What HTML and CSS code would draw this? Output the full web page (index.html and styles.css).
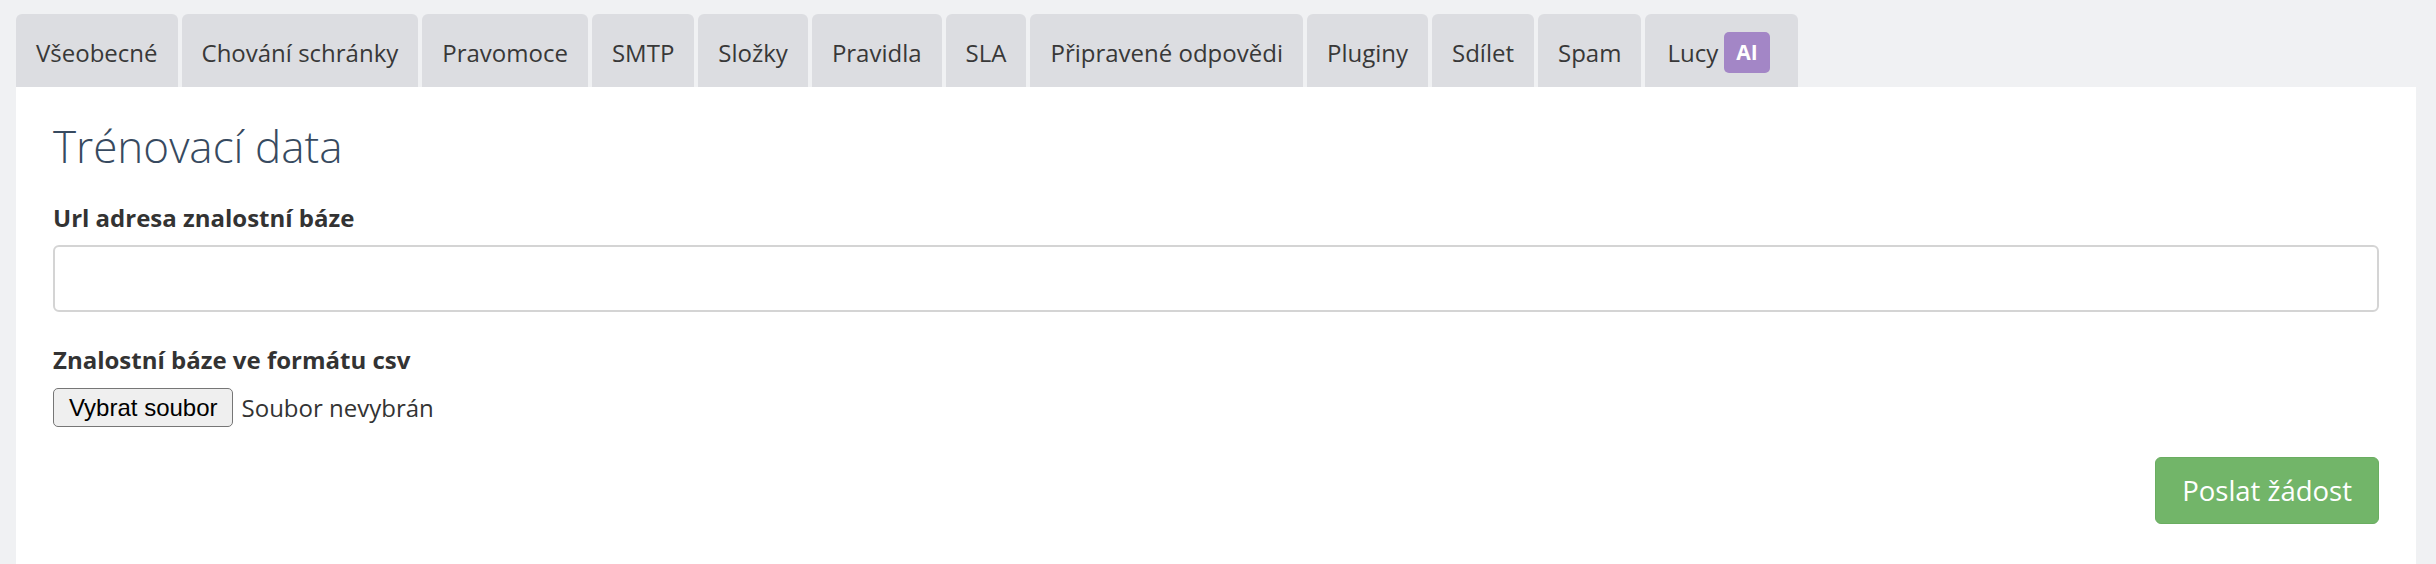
FILE: index.html
```html
<!DOCTYPE html>
<html lang="cs">
<head>
<meta charset="utf-8">
<title>Trénovací data</title>
<link rel="stylesheet" href="styles.css">
</head>
<body>
<div class="page">
  <ul class="tabs">
    <li class="tab">Všeobecné</li>
    <li class="tab">Chování schránky</li>
    <li class="tab">Pravomoce</li>
    <li class="tab">SMTP</li>
    <li class="tab">Složky</li>
    <li class="tab">Pravidla</li>
    <li class="tab">SLA</li>
    <li class="tab">Připravené odpovědi</li>
    <li class="tab">Pluginy</li>
    <li class="tab">Sdílet</li>
    <li class="tab">Spam</li>
    <li class="tab tab-lucy">Lucy <span class="badge">AI</span></li>
  </ul>
  <div class="panel">
    <h2 class="title">Trénovací data</h2>
    <label class="label">Url adresa znalostní báze</label>
    <div class="input"></div>
    <label class="label label-2">Znalostní báze ve formátu csv</label>
    <div class="file-row">
      <span class="file-btn">Vybrat soubor</span>
      <span class="file-name">Soubor nevybrán</span>
    </div>
    <div class="actions">
      <span class="submit">Poslat žádost</span>
    </div>
  </div>
</div>
</body>
</html>
```
FILE: styles.css
```css
* { box-sizing: border-box; }
html, body {
  margin: 0;
  padding: 0;
  background: #f0f1f3;
  font-family: "Open Sans", "Liberation Sans", sans-serif;
  color: #333;
}
.page {
  padding: 14px 20px 0 16px;
}
.tabs {
  list-style: none;
  margin: 0;
  padding: 0;
  display: flex;
  gap: 4px;
}
.tab {
  background: #dcdde1;
  border-radius: 6px 6px 0 0;
  font-size: 24px;
  line-height: 34px;
  height: 73px;
  padding: 4px 20px 0 20px;
  color: #383838;
  white-space: nowrap;
  display: flex;
  align-items: center;
}
.tab-lucy {
  padding-left: 22px;
  padding-right: 28px;
}
.badge {
  display: inline-block;
  margin-left: 6px;
  background: #a386c6;
  color: #fff;
  font-weight: 700;
  font-size: 21px;
  line-height: 41px;
  height: 41px;
  padding: 0 12px;
  border-radius: 5px;
}
.panel {
  background: #fff;
  padding: 32px 37px 40px 37px;
  min-height: 480px;
}
.title {
  margin: 0;
  font-size: 44px;
  line-height: 54px;
  font-weight: 300;
  color: #374a60;
}
.label {
  display: block;
  margin-top: 28px;
  font-size: 24px;
  line-height: 33px;
  font-weight: 700;
  color: #333;
}
.input {
  margin-top: 11px;
  height: 67px;
  border: 2px solid #d4d4d4;
  border-radius: 6px;
  background: #fff;
}
.label-2 {
  margin-top: 31px;
}
.file-row {
  margin-top: 12px;
  display: flex;
  align-items: center;
}
.file-btn {
  display: inline-flex;
  align-items: center;
  height: 39px;
  padding: 0 14px 0 15px;
  border: 1.5px solid #767676;
  border-radius: 5px;
  background: #efefef;
  font-family: "Liberation Sans", Arial, sans-serif;
  font-size: 24px;
  color: #000;
}
.file-name {
  margin-left: 9px;
  font-size: 24px;
  color: #333;
}
.actions {
  margin-top: 30px;
  display: flex;
  justify-content: flex-end;
}
.submit {
  display: inline-block;
  height: 67px;
  padding: 14px 26px 14px 26px;
  font-size: 27.5px;
  line-height: 37px;
  color: #fff;
  background: #72b569;
  border: 1px solid #6aad61;
  border-radius: 6px;
}
```
